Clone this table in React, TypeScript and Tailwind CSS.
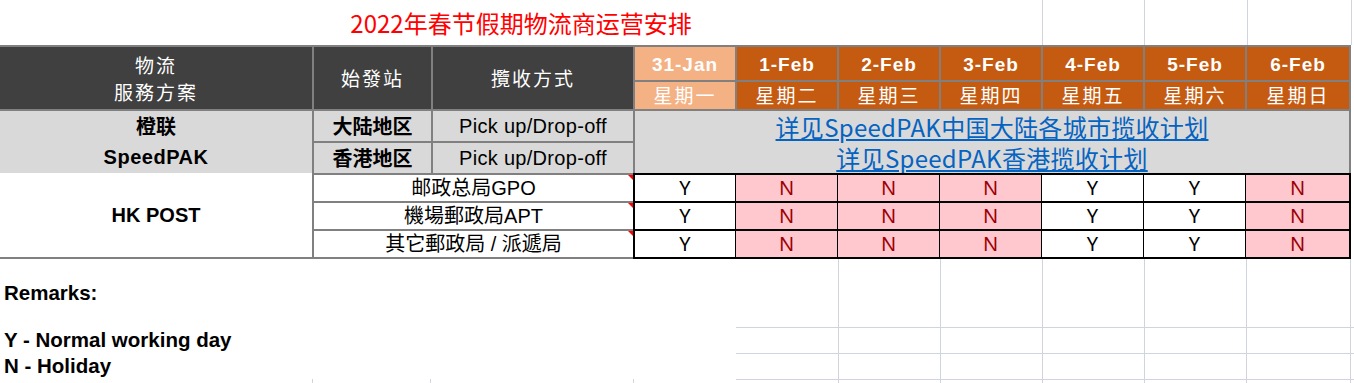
const days = [
  { date: "31-Jan", week: "星期一", first: true },
  { date: "1-Feb", week: "星期二" },
  { date: "2-Feb", week: "星期三" },
  { date: "3-Feb", week: "星期四" },
  { date: "4-Feb", week: "星期五" },
  { date: "5-Feb", week: "星期六" },
  { date: "6-Feb", week: "星期日" },
];

const hkRows = [
  { name: "邮政总局GPO", marks: ["Y", "N", "N", "N", "Y", "Y", "N"] },
  { name: "機場郵政局APT", marks: ["Y", "N", "N", "N", "Y", "Y", "N"] },
  { name: "其它郵政局 / 派遞局", marks: ["Y", "N", "N", "N", "Y", "Y", "N"] },
];

const remarks = [
  { text: "Remarks:", h: "h-[68px]", top: false },
  { text: "Y - Normal working day", h: "h-[26px]", top: true },
  { text: "N - Holiday", h: "h-[26px]", top: true },
];

export default function App() {
  return (
    <div className="h-[383px] w-[1354px] overflow-hidden bg-white font-['Liberation_Sans','Noto_Sans_CJK_SC',sans-serif] text-black">
      {/* Title */}
      <div className="flex h-[45px]">
        <div className="flex w-[1042px] items-center justify-center font-['Noto_Sans_CJK_SC',sans-serif] text-[24px] text-[#ff0000]">
          2022年春节假期物流商运营安排
        </div>
        <div className="w-[102px] border-l border-[#cfd4df]" />
        <div className="w-[103px] border-l border-[#cfd4df]" />
        <div className="w-[104px] border-l border-[#cfd4df]" />
        <div className="flex-1 border-l border-[#cfd4df]" />
      </div>

      {/* Header + SpeedPAK */}
      <div className="grid w-[1351px] grid-cols-[312px_117px_200px_repeat(6,100px)_102px] grid-rows-[33px_27px_30px_30px] gap-[2px] bg-[#808080] pt-[2px] pr-[2px]">
        <div className="col-start-1 row-span-2 row-start-1 flex flex-col items-center justify-center bg-[#404040] font-['Noto_Sans_CJK_TC',sans-serif] text-[19px] leading-[27px] tracking-[2px] text-white">
          <span>物流</span>
          <span>服務方案</span>
        </div>
        <div className="col-start-2 row-span-2 row-start-1 flex items-center justify-center bg-[#404040] font-['Noto_Sans_CJK_TC',sans-serif] text-[19px] tracking-[2px] text-white">
          始發站
        </div>
        <div className="col-start-3 row-span-2 row-start-1 flex items-center justify-center bg-[#404040] font-['Noto_Sans_CJK_TC',sans-serif] text-[19px] tracking-[2px] text-white">
          攬收方式
        </div>
        {days.map((d) => (
          <div
            key={d.date}
            className={`row-start-1 flex items-center justify-center pt-[3px] text-[19px] font-bold tracking-[1px] text-white ${d.first ? "bg-[#f4b183]" : "bg-[#c55a11]"}`}
          >
            {d.date}
          </div>
        ))}
        {days.map((d) => (
          <div
            key={d.week}
            className={`row-start-2 flex items-center justify-center font-['Noto_Sans_CJK_SC',sans-serif] text-[19px] tracking-[2px] text-white ${d.first ? "bg-[#f4b183]" : "bg-[#c55a11]"}`}
          >
            {d.week}
          </div>
        ))}

        {/* SpeedPAK */}
        <div className="col-start-1 row-span-2 row-start-3 flex flex-col bg-[#d9d9d9] text-[20px] font-bold">
          <div className="flex h-[30px] items-center justify-center font-['Noto_Sans_CJK_SC',sans-serif]">橙联</div>
          <div className="flex h-[32px] items-center justify-center tracking-[0.5px]">SpeedPAK</div>
        </div>
        <div className="col-start-2 row-start-3 flex items-center justify-center bg-[#d9d9d9] font-['Noto_Sans_CJK_SC',sans-serif] text-[20px] font-bold">
          大陆地区
        </div>
        <div className="col-start-2 row-start-4 flex items-center justify-center bg-[#d9d9d9] font-['Noto_Sans_CJK_SC',sans-serif] text-[20px] font-bold">
          香港地区
        </div>
        <div className="col-start-3 row-start-3 flex items-center justify-center bg-[#d9d9d9] text-[20px] tracking-[0.3px]">
          Pick up/Drop-off
        </div>
        <div className="col-start-3 row-start-4 flex items-center justify-center bg-[#d9d9d9] text-[20px] tracking-[0.3px]">
          Pick up/Drop-off
        </div>
        <div className="col-span-7 col-start-4 row-span-2 row-start-3 flex flex-col items-center bg-[#d9d9d9] font-['Noto_Sans_CJK_SC',sans-serif] text-[24px] leading-[28px] tracking-[0.3px] text-[#0563c1]">
          <span className="mt-[2px] underline underline-offset-[2px]">详见SpeedPAK中国大陆各城市揽收计划</span>
          <span className="mt-[3px] underline underline-offset-[2px]">详见SpeedPAK香港揽收计划</span>
        </div>
      </div>

      {/* HK POST */}
      <div className="flex">
        <div className="flex h-[86px] w-[314px] items-center justify-center border-r-2 border-b-2 border-[#808080] text-[20px] font-bold">
          HK POST
        </div>
        <div className="flex flex-col">
          {hkRows.map((r, ri) => (
            <div key={r.name} className="flex">
              <div
                className={`relative flex h-[28px] w-[319px] items-center justify-center border-b-2 border-[#808080] text-[20px] ${ri === 0 ? "h-[30px] border-t-2" : ""}`}
              >
                {r.name}
                <span className="absolute top-0 right-0 h-0 w-0 border-t-[5px] border-l-[5px] border-t-[#ff0000] border-l-transparent" />
              </div>
              {r.marks.map((m, i) => (
                <div
                  key={i}
                  className={`flex items-center justify-center border-b-2 border-black font-['Noto_Sans',sans-serif] text-[20px] ${ri === 0 ? "h-[30px] border-t-2" : "h-[28px]"} ${i === 0 ? "border-l-2" : "border-l"} ${i === 6 ? "w-[106px] border-r-2" : "w-[102px]"} ${m === "N" ? "bg-[#ffc7ce] text-[#9c0006]" : "bg-white text-black"}`}
                >
                  {m}
                </div>
              ))}
            </div>
          ))}
        </div>
      </div>

      {/* Remarks + empty sheet grid */}
      {remarks.map((r) => (
        <div key={r.text} className={`flex ${r.h}`}>
          <div className="flex w-[736px] items-center pl-[4px] text-[20.5px] font-bold">{r.text}</div>
          <div className={`flex flex-1 ${r.top ? "border-t border-[#cfd4df]" : ""}`}>
            <div className="w-[102px]" />
            <div className="w-[102px] border-l border-[#cfd4df]" />
            <div className="w-[102px] border-l border-[#cfd4df]" />
            <div className="w-[102px] border-l border-[#cfd4df]" />
            <div className="w-[102px] border-l border-[#cfd4df]" />
            <div className="w-[104px] border-l border-[#cfd4df]" />
            <div className="flex-1 border-l border-[#cfd4df]" />
          </div>
        </div>
      ))}
      <div className="flex h-[20px]">
        <div className="w-[313px] border-r border-[#cfd4df]" />
        <div className="w-[118px] border-r border-[#cfd4df]" />
        <div className="w-[203px] border-r border-[#cfd4df]" />
        <div className="w-[102px]" />
        <div className="flex flex-1 border-t border-[#cfd4df]">
          <div className="w-[102px]" />
          <div className="w-[102px] border-l border-[#cfd4df]" />
          <div className="w-[102px] border-l border-[#cfd4df]" />
          <div className="w-[102px] border-l border-[#cfd4df]" />
          <div className="w-[102px] border-l border-[#cfd4df]" />
          <div className="w-[104px] border-l border-[#cfd4df]" />
          <div className="flex-1 border-l border-[#cfd4df]" />
        </div>
      </div>
    </div>
  );
}
